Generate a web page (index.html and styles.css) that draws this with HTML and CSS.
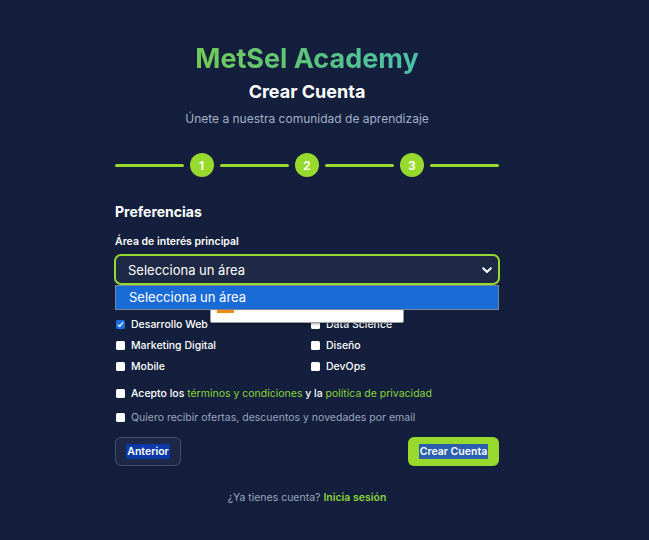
FILE: index.html
```html
<!DOCTYPE html>
<html lang="es">
<head>
<meta charset="utf-8">
<title>MetSel Academy - Crear Cuenta</title>
<link rel="stylesheet" href="styles.css">
</head>
<body>
<main class="wrap">
  <header class="head">
    <h1 class="brand">MetSel Academy</h1>
    <h2 class="title">Crear Cuenta</h2>
    <p class="sub">Únete a nuestra comunidad de aprendizaje</p>
  </header>

  <div class="stepper">
    <span class="line"></span>
    <span class="dot">1</span>
    <span class="line"></span>
    <span class="dot">2</span>
    <span class="line"></span>
    <span class="dot">3</span>
    <span class="line"></span>
  </div>

  <section class="form">
    <h3 class="section">Preferencias</h3>
    <label class="label">Área de interés principal</label>
    <div class="select-wrap">
      <div class="select">
        <span>Selecciona un área</span>
        <svg class="chev" width="10" height="7" viewBox="0 0 10 7"><path d="M1.2 1.3 5 5 8.8 1.3" fill="none" stroke="#fff" stroke-width="2" stroke-linecap="round" stroke-linejoin="round"/></svg>
      </div>
      <div class="popup"><span class="orange"></span></div>
      <div class="dropdown">Selecciona un área</div>
    </div>

    <div class="grid">
      <div class="check"><span class="box on"><svg width="9" height="9" viewBox="0 0 9 9"><path d="M2 4.8 3.7 6.4 7 2.4" fill="none" stroke="#fff" stroke-width="1.3"/></svg></span>Desarrollo Web</div>
      <div class="check"><span class="box"></span>Data Science</div>
      <div class="check"><span class="box"></span>Marketing Digital</div>
      <div class="check"><span class="box"></span>Diseño</div>
      <div class="check"><span class="box"></span>Mobile</div>
      <div class="check"><span class="box"></span>DevOps</div>
    </div>

    <div class="check terms"><span class="box"></span>Acepto los&nbsp;<a class="link">términos y condiciones</a>&nbsp;y la&nbsp;<a class="link">política de privacidad</a></div>
    <div class="check news"><span class="box"></span>Quiero recibir ofertas, descuentos y novedades por email</div>

    <div class="actions">
      <button class="btn prev"><span class="sel-a">Anterior</span></button>
      <button class="btn next"><span class="sel-b">Crear Cuenta</span></button>
    </div>
  </section>

  <p class="foot">¿Ya tienes cuenta? <a class="link strong">Inicia sesión</a></p>
</main>
</body>
</html>
```

FILE: styles.css
```css
* { box-sizing: border-box; }
html, body { margin: 0; padding: 0; }
body {
  background: #131f3c;
  font-family: Inter, "Noto Sans", sans-serif;
  color: #fff;
  width: 649px;
  height: 540px;
  overflow: hidden;
}
.wrap {
  width: 384px;
  margin-left: 115px;
  padding-top: 42px;
}
.head { text-align: center; }
.brand {
  margin: 0;
  font-size: 27px;
  line-height: 34px;
  font-weight: 700;
  background: linear-gradient(90deg, #74cb55 0%, #5cc47e 50%, #4bbfab 100%);
  -webkit-background-clip: text;
  background-clip: text;
  color: transparent;
  display: inline-block;
}
.title {
  margin: 5px 0 0;
  font-size: 18px;
  line-height: 22px;
  font-weight: 700;
}
.sub {
  margin: 8px 0 0;
  font-size: 12px;
  line-height: 16px;
  color: #a3b0c8;
}
.stepper {
  margin-top: 26px;
  display: flex;
  align-items: center;
  gap: 6px;
  height: 24px;
}
.line {
  flex: 1;
  height: 3px;
  border-radius: 2px;
  background: #97d92d;
}
.dot {
  width: 24px;
  height: 24px;
  border-radius: 50%;
  background: #97d92d;
  color: #fff;
  font-size: 13px;
  font-weight: 600;
  display: flex;
  align-items: center;
  justify-content: center;
  font-family: Roboto, Inter, sans-serif;
}
.form { margin-top: 26px; }
.section {
  margin: 0;
  font-size: 14px;
  line-height: 18px;
  font-weight: 700;
}
.label {
  display: block;
  margin-top: 14px;
  font-size: 10.5px;
  line-height: 14px;
  font-weight: 600;
}
.select-wrap {
  position: relative;
  margin-top: 5px;
}
.select {
  height: 31px;
  margin: 0 -1px;
  border: 2px solid #97d92d;
  border-radius: 7px;
  background: #1e2946;
  display: flex;
  align-items: center;
  justify-content: space-between;
  padding: 0 6px 0 12px;
  font-size: 13px;
}
.chev { margin-top: 1px; }
.dropdown {
  position: absolute;
  left: 0;
  top: 31px;
  width: 384px;
  height: 25px;
  background: #1b6bd6;
  border: 1px solid #7a8599;
  font-size: 13px;
  line-height: 23px;
  padding-left: 13px;
  color: #fff;
}
.popup {
  position: absolute;
  left: 95px;
  top: 46px;
  width: 194px;
  height: 23px;
  background: #fff;
  border: 1px solid #9aa0aa;
  border-radius: 2px;
  box-shadow: 0 1px 3px rgba(0,0,0,0.35);
}
.orange {
  position: absolute;
  left: 6px;
  top: 6px;
  width: 17px;
  height: 6px;
  background: #f08a12;
}
.grid {
  margin-top: 29px;
  display: grid;
  grid-template-columns: 195px 1fr;
  grid-auto-rows: 21px;
}
.check {
  display: flex;
  align-items: center;
  font-size: 10.5px;
  font-weight: 500;
  color: #fff;
  white-space: nowrap;
}
.box {
  width: 9px;
  height: 9px;
  margin: 0 6px 0 1px;
  background: #fff;
  border-radius: 1.5px;
  flex: none;
  display: flex;
  align-items: center;
  justify-content: center;
}
.box.on { background: #1a6fe0; }
.terms { margin-top: 9px; height: 14px; }
.news { margin-top: 10px; height: 14px; color: #9aa6bf; font-weight: 400; }
.link { color: #8bd33a; text-decoration: none; }
.terms .link { font-weight: 400; }
.actions {
  margin-top: 13px;
  display: flex;
  justify-content: space-between;
}
.btn {
  height: 29px;
  border-radius: 6px;
  font-family: Inter, sans-serif;
  font-size: 10.5px;
  font-weight: 600;
  color: #fff;
  padding: 0;
  display: flex;
  align-items: center;
  justify-content: center;
}
.prev {
  width: 66px;
  background: #1d2846;
  border: 1px solid #46506a;
}
.next {
  width: 91px;
  background: #97d92d;
  border: none;
}
.sel-a { background: #0b3aa8; padding: 1px 1px; }
.sel-b { background: #2b5fae; padding: 1px 1px; }
.foot {
  margin: 25px 0 0;
  text-align: center;
  font-size: 10.5px;
  line-height: 14px;
  color: #9aa6bf;
}
.strong { font-weight: 600; }
```
